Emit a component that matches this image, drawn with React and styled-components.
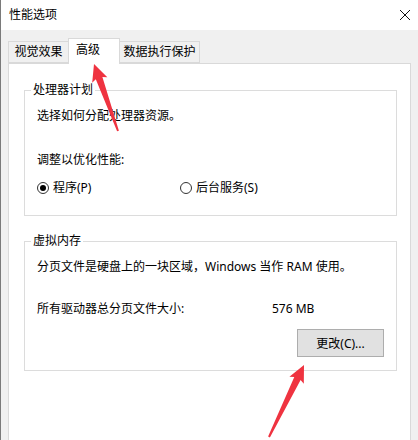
import React from 'react';
import styled, { createGlobalStyle } from 'styled-components';

const GlobalStyle = createGlobalStyle`
  html, body {
    margin: 0;
    padding: 0;
    background: #f0f0f0;
  }
  * {
    box-sizing: border-box;
  }
`;

const FONT = `"Noto Sans", "Noto Sans CJK SC", sans-serif`;

// arrow polygon from tip to tail
function arrowPoints(tip, tail, headLen, headHalf, neckHalf, tailHalf) {
  const dx = tail[0] - tip[0];
  const dy = tail[1] - tip[1];
  const len = Math.hypot(dx, dy);
  const ux = dx / len;
  const uy = dy / len;
  const nx = -uy;
  const ny = ux;
  const bx = tip[0] + ux * headLen;
  const by = tip[1] + uy * headLen;
  const pts = [
    tip,
    [bx + nx * headHalf, by + ny * headHalf],
    [bx + nx * neckHalf - ux * 2, by + ny * neckHalf - uy * 2],
    [tail[0] + nx * tailHalf, tail[1] + ny * tailHalf],
    [tail[0] - nx * tailHalf, tail[1] - ny * tailHalf],
    [bx - nx * neckHalf - ux * 2, by - ny * neckHalf - uy * 2],
    [bx - nx * headHalf, by - ny * headHalf],
  ];
  return pts.map((p) => p.map((v) => v.toFixed(1)).join(',')).join(' ');
}

export default function App() {
  return (
    <>
      <GlobalStyle />
      <Window>
        <TitleBar>
          <Title>性能选项</Title>
          <CloseIcon width="12" height="12" viewBox="0 0 12 12">
            <path d="M1 1 L11 11 M11 1 L1 11" stroke="#111" strokeWidth="1" />
          </CloseIcon>
        </TitleBar>

        <Body>
          <TabStrip>
            <Tab $w={61}>视觉效果</Tab>
            <Tab $w={52} $active>高级</Tab>
            <Tab $w={81}>数据执行保护</Tab>
          </TabStrip>

          <Panel>
            <Group>
              <Legend>处理器计划</Legend>
              <Line>选择如何分配处理器资源。</Line>
              <Line $gap={28}>调整以优化性能:</Line>
              <RadioRow>
                <RadioItem>
                  <Radio $checked />
                  程序(P)
                </RadioItem>
                <RadioItem>
                  <Radio />
                  后台服务(S)
                </RadioItem>
              </RadioRow>
            </Group>

            <Group $bottom={13}>
              <Legend>虚拟内存</Legend>
              <Line>分页文件是硬盘上的一块区域，Windows 当作 RAM 使用。</Line>
              <SizeRow>
                <span>所有驱动器总分页文件大小:</span>
                <span>576 MB</span>
              </SizeRow>
              <ButtonRow>
                <Button>更改(C)...</Button>
              </ButtonRow>
            </Group>
          </Panel>
        </Body>

        <Overlay width="418" height="440" viewBox="0 0 418 440">
          <polygon points={arrowPoints([93, 64], [117, 131], 17, 8, 3.5, 1)} fill="#ef3340" />
          <polygon points={arrowPoints([303, 365], [268, 437], 17, 8, 3.5, 1)} fill="#ef3340" />
        </Overlay>
      </Window>
    </>
  );
}

const Window = styled.div`
  position: relative;
  width: 418px;
  height: 440px;
  overflow: hidden;
  border-left: 1px solid #7a7a7a;
  background: #f0f0f0;
  font-family: ${FONT};
  font-size: 12px;
  line-height: 16px;
  color: #000;
`;

const TitleBar = styled.div`
  height: 30px;
  background: #fff;
  display: flex;
  align-items: center;
  justify-content: space-between;
  padding: 0 7px 0 8px;
`;

const Title = styled.span`
  font-size: 12px;
`;

const CloseIcon = styled.svg`
  display: block;
  margin-top: 0;
`;

const Body = styled.div`
  padding: 8px 0 0 7px;
`;

const TabStrip = styled.div`
  display: flex;
  align-items: flex-end;
  height: 25px;
  position: relative;
  z-index: 1;
`;

const Tab = styled.div`
  width: ${(p) => p.$w}px;
  height: ${(p) => (p.$active ? 26 : 22)}px;
  margin-left: -1px;
  margin-bottom: ${(p) => (p.$active ? -1 : 0)}px;
  border: 1px solid #d9d9d9;
  border-bottom: ${(p) => (p.$active ? 'none' : '1px solid #d9d9d9')};
  background: ${(p) => (p.$active ? '#fff' : '#f0f0f0')};
  display: flex;
  align-items: center;
  justify-content: center;
  padding: ${(p) => (p.$active ? '0 12px 3px 0' : '0')};
  position: relative;
  z-index: ${(p) => (p.$active ? 2 : 1)};
  white-space: nowrap;

  &:first-child {
    margin-left: 0;
  }
`;

const Panel = styled.div`
  width: 403px;
  height: 400px;
  background: #fff;
  border: 1px solid #d9d9d9;
  padding-top: 26px;
`;

const Group = styled.div`
  position: relative;
  margin: 0 13px 25px 15px;
  border: 1px solid #dcdcdc;
  padding: 17px 12px ${(p) => p.$bottom ?? 19}px 12px;
`;

const Legend = styled.span`
  position: absolute;
  top: -9px;
  left: 6px;
  padding: 0 2px;
  background: #fff;
`;

const Line = styled.div`
  margin-top: ${(p) => p.$gap ?? 0}px;
  white-space: nowrap;
`;

const RadioRow = styled.div`
  display: grid;
  grid-template-columns: 143px auto;
  margin-top: 12px;
`;

const RadioItem = styled.label`
  display: flex;
  align-items: center;
  gap: 4px;
`;

const Radio = styled.span`
  width: 12px;
  height: 12px;
  border-radius: 50%;
  border: 1px solid #333;
  display: flex;
  align-items: center;
  justify-content: center;

  &::after {
    content: '';
    width: 6px;
    height: 6px;
    border-radius: 50%;
    background: ${(p) => (p.$checked ? '#000' : 'transparent')};
  }
`;

const SizeRow = styled.div`
  display: grid;
  grid-template-columns: 235px auto;
  margin-top: 26px;
`;

const ButtonRow = styled.div`
  display: flex;
  justify-content: flex-end;
  margin-top: 12px;
`;

const Button = styled.button`
  width: 87px;
  height: 28px;
  background: #e1e1e1;
  border: 1px solid #adadad;
  font-family: ${FONT};
  font-size: 12px;
  color: #000;
  padding: 0;
`;

const Overlay = styled.svg`
  position: absolute;
  left: 0;
  top: 0;
  pointer-events: none;
  z-index: 5;
`;
